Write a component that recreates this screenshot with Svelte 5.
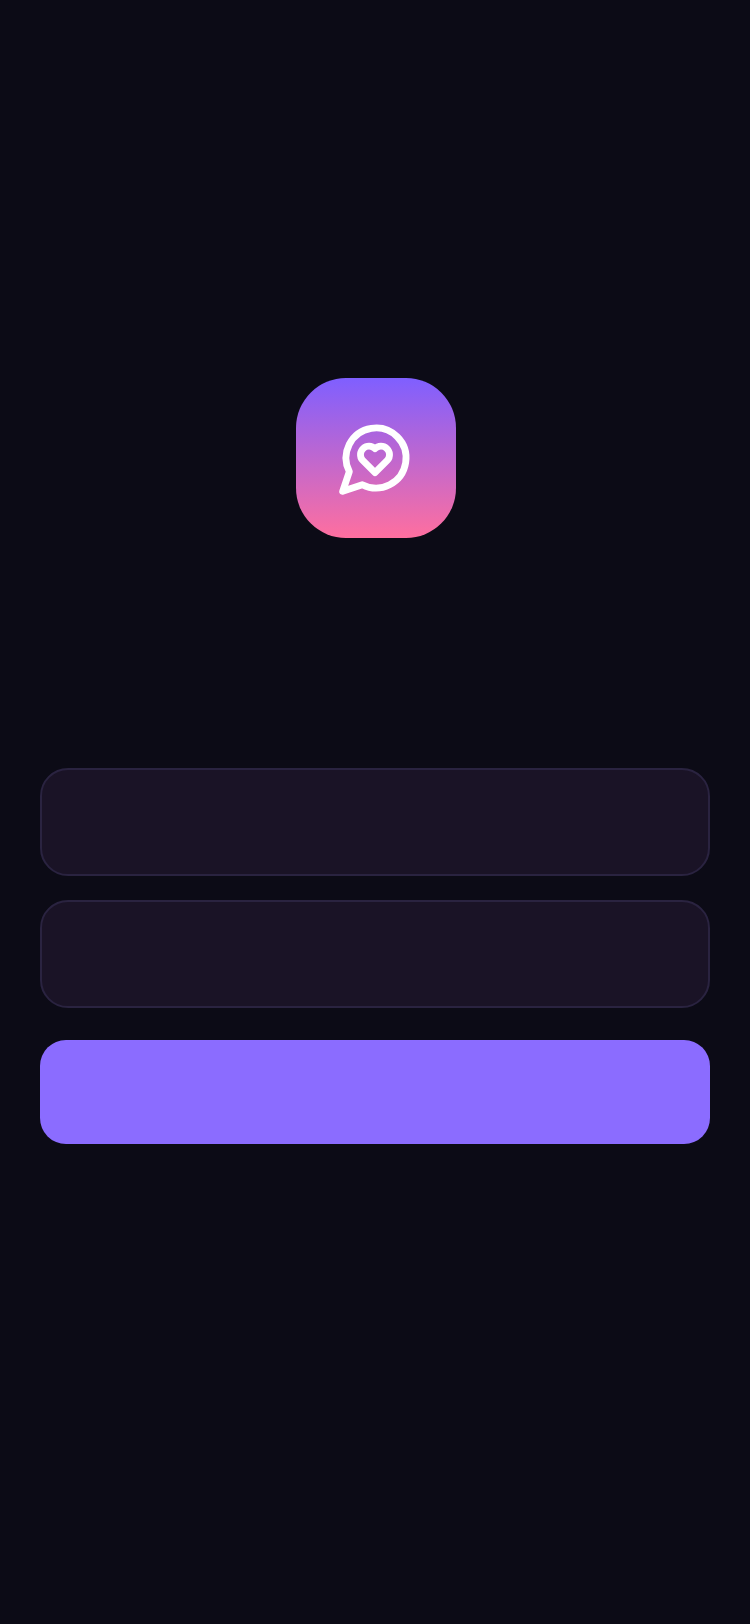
<script>
	let email = $state('');
	let password = $state('');
</script>

<main class="screen">
	<div class="logo">
		<svg
			width="80"
			height="80"
			viewBox="0 0 24 24"
			fill="none"
			stroke="currentColor"
			stroke-width="2.05"
			stroke-linecap="round"
			stroke-linejoin="round"
			aria-hidden="true"
		>
			<path d="M7.9 20A9 9 0 1 0 4 16.1L2 22Z" />
			<path d="M11.7 16.4l-3.75-3.75a2.55 2.55 0 0 1 3.75-3.45a2.55 2.55 0 0 1 3.75 3.45z" />
		</svg>
	</div>

	<form class="form" onsubmit={(e) => e.preventDefault()}>
		<input class="field" type="email" aria-label="Email" bind:value={email} />
		<input class="field" type="password" aria-label="Password" bind:value={password} />
		<button class="submit" type="submit" aria-label="Submit"></button>
	</form>
</main>

<style>
	:global(body) {
		background: #0c0b16;
	}
	.screen {
		box-sizing: border-box;
		min-height: 1624px;
		padding: 378px 40px 0;
		display: flex;
		flex-direction: column;
		align-items: center;
		background: #0c0b16;
	}
	.logo {
		width: 160px;
		height: 160px;
		margin-left: 2px;
		border-radius: 50px;
		background: linear-gradient(180deg, #7f5fff 0%, #ff6f9f 100%);
		color: #fff;
		display: flex;
		align-items: center;
		justify-content: center;
		flex: none;
	}
	.form {
		width: 100%;
		margin-top: 230px;
		display: flex;
		flex-direction: column;
		gap: 24px;
	}
	.field {
		box-sizing: border-box;
		display: block;
		width: 100%;
		height: 108px;
		padding: 0 32px;
		background: #1a1326;
		border: 2px solid #2a2340;
		border-radius: 28px;
		outline: none;
		color: #fff;
		font-family: 'Liberation Sans', sans-serif;
		font-size: 30px;
	}
	.submit {
		display: block;
		width: 100%;
		height: 104px;
		margin-top: 8px;
		border: none;
		border-radius: 26px;
		background: #8b6cff;
	}
</style>
